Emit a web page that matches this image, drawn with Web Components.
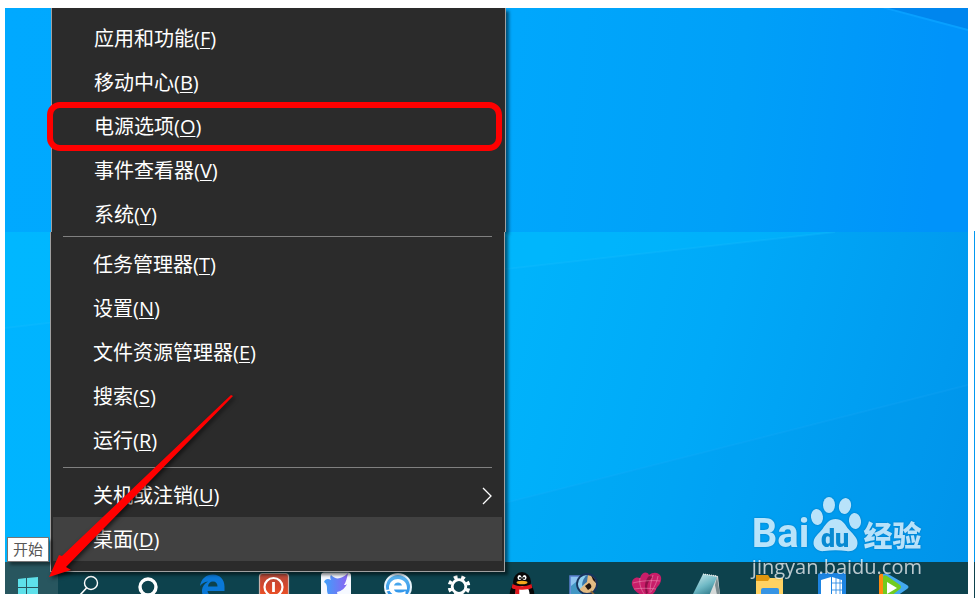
<!DOCTYPE html>
<html lang="zh-CN">
<head>
<meta charset="utf-8">
<title>开始</title>
<style>
  body {
    margin: 0;
    background: #fff;
    font-family: "Open Sans", "Noto Sans CJK SC", sans-serif;
  }
</style>
</head>
<body>
<desktop-screen>
  <wall-paper slot="wallpaper" kind="upper"></wall-paper>
  <wall-paper slot="wallpaper" kind="lower"></wall-paper>

  <task-bar slot="taskbar">
    <task-icon name="start" label="开始" active></task-icon>
    <task-icon name="search" label="搜索"></task-icon>
    <task-icon name="cortana" label="Cortana"></task-icon>
    <task-icon name="edge" label="Edge"></task-icon>
    <task-icon name="power" label="Power"></task-icon>
    <task-icon name="bird" label="Bird"></task-icon>
    <task-icon name="ie" label="Browser"></task-icon>
    <task-icon name="gear" label="设置"></task-icon>
    <task-icon name="penguin" label="QQ"></task-icon>
    <task-icon name="viewer" label="Viewer"></task-icon>
    <task-icon name="heart" label="Heart"></task-icon>
    <task-icon name="notes" label="Notes"></task-icon>
    <task-icon name="folder" label="文件资源管理器"></task-icon>
    <task-icon name="cube" label="Cube"></task-icon>
    <task-icon name="video" label="Video"></task-icon>
  </task-bar>

  <site-mark slot="overlay"></site-mark>

  <power-menu slot="overlay">
    <menu-entry slot="top" key="F">应用和功能</menu-entry>
    <menu-entry slot="top" key="B">移动中心</menu-entry>
    <menu-entry slot="top" key="O" marked>电源选项</menu-entry>
    <menu-entry slot="top" key="V">事件查看器</menu-entry>
    <menu-entry slot="top" key="Y">系统</menu-entry>
    <menu-entry slot="middle" key="T">任务管理器</menu-entry>
    <menu-entry slot="middle" key="N">设置</menu-entry>
    <menu-entry slot="middle" key="E">文件资源管理器</menu-entry>
    <menu-entry slot="middle" key="S">搜索</menu-entry>
    <menu-entry slot="middle" key="R">运行</menu-entry>
    <menu-entry slot="bottom" key="U" submenu>关机或注销</menu-entry>
    <menu-entry slot="bottom" key="D" hovered>桌面</menu-entry>
  </power-menu>

  <hover-tip slot="overlay">开始</hover-tip>
  <red-arrow slot="overlay"></red-arrow>
</desktop-screen>

<script>
const ICONS = {
  start: `
    <path fill="#5ee0ea" d="M13 17l8-1v9h-8zM22 16l11-1v10H22zM13 26h8v9l-8-1zM22 26h11v10l-11-1z"/>`,
  search: `
    <circle cx="33" cy="21" r="6.5" fill="none" stroke="#fff" stroke-width="1.4"/>
    <path d="M28.5 26L22 33" stroke="#fff" stroke-width="1.6"/>`,
  cortana: `<circle cx="28" cy="25" r="8" fill="none" stroke="#fff" stroke-width="3.4"/>`,
  edge: `
    <path fill="#0a78d7" d="M18 24C19 17 24 12.5 31 12.5c7 0 11.5 5 11.5 12V29H25.5c.5 4 4 5 8 5l-3 4c-7 0-11-4-10.5-10 .3-3.500 2.500-6.500 6-8.500-3.500.5-6 2-8 4.500zM26 24.500h9.500c0-3-1.500-5-4.500-5s-4.700 2-5 5z"/>`,
  power: `
    <defs><linearGradient id="g" x2="0" y2="1"><stop offset="0" stop-color="#b04a3c"/><stop offset=".4" stop-color="#d4462c"/><stop offset="1" stop-color="#ff5a20"/></linearGradient></defs>
    <rect x="15.5" y="11.5" width="29" height="30" rx="3" fill="url(#g)" stroke="#c9b3ad" stroke-width="1.2"/>
    <circle cx="29.5" cy="25" r="9" fill="none" stroke="#fff" stroke-width="2.2"/>
    <path d="M29.5 20v10" stroke="#fff" stroke-width="2.8"/>`,
  bird: `
    <defs><linearGradient id="g" x1="0" x2="1"><stop offset="0" stop-color="#3fa0fa"/><stop offset="1" stop-color="#8a63f2"/></linearGradient></defs>
    <rect x="15" y="10.5" width="30" height="32" rx="3" fill="#f6f9ff"/>
    <path fill="url(#g)" d="M18 20c1-3 4-4 7-2-1-2-1-4 0-5 3 3 6 4 9 3 3-1 5-2 8-5-1 5-2 9-4 12 1 0 2 0 3-1-2 4-5 7-10 8l1 5h-8c-3-3-3-6-3-9 0-3-1-5-3-6z"/>`,
  ie: `
    <defs><linearGradient id="g" x2="0" y2="1"><stop offset="0" stop-color="#62b9f0"/><stop offset="1" stop-color="#1e88e8"/></linearGradient></defs>
    <circle cx="30" cy="25" r="13" fill="url(#g)" stroke="#e8f4fb" stroke-width="2"/>
    <path fill="#fff" fill-rule="evenodd" d="M21 25c.5-5 4-8 9-8s9 3.500 9 9v1.500H26c.5 2 2 3 4.500 3 3 0 5-.5 7-1.500V33c-9 3-17-1-16.500-8zm5-1.500h8c-.5-2-2-3-4-3s-3.500 1-4 3z"/>
    <path fill="none" stroke="#fff" stroke-width="1.3" d="M17 29l5-1"/>`,
  gear: `
    <circle cx="29" cy="24.5" r="6.8" fill="none" stroke="#fff" stroke-width="2.8"/>
    <circle cx="29" cy="24.5" r="9.5" fill="none" stroke="#fff" stroke-width="3.6" stroke-dasharray="3.700 3.761" stroke-dashoffset="-2"/>`,
  penguin: `
    <ellipse cx="30" cy="20" rx="9" ry="10" fill="#080808"/>
    <path fill="#080808" d="M21 22c-2 4-4 8-3 12h24c1-4-1-8-3-12z"/>
    <ellipse cx="30.5" cy="31" rx="7" ry="7" fill="#fff"/>
    <ellipse cx="27.5" cy="15.5" rx="2" ry="2.6" fill="#fff"/><ellipse cx="32.5" cy="15.5" rx="2" ry="2.6" fill="#fff"/>
    <circle cx="28" cy="16" r="1" fill="#000"/><circle cx="32" cy="16" r="1" fill="#000"/>
    <ellipse cx="30" cy="20.5" rx="5.5" ry="1.8" fill="#f5a81c"/>
    <path fill="#e3171d" d="M20.5 22c6 3 13 3 19 0l.8 4c-4 1.500-9 2-13 1.500V32h-4v-5c-2 0-3-.5-3.600-1z"/>`,
  viewer: `
    <path fill="#8cc3ef" stroke="#5a7fd0" stroke-width="1.5" d="M16 14h14v20H16z"/>
    <path fill="#4297c4" d="M17 24l5-4 7 4v9H17z"/>
    <circle cx="33" cy="22" r="10" fill="#e3bb83"/>
    <path fill="#8fd0ef" d="M33 12a10 10 0 0 0-8 16l5-5 4-10z"/>
    <path fill="#3a76a8" d="M34 12c-4 3-6 7-6 12l5-4z"/>
    <path fill="#20150f" d="M31 24l4-3c2 1 3 3 2 5l-3 2zM37 13c3 2 5 5 5 8l-3-3z"/>
    <circle cx="33" cy="22" r="10" fill="none" stroke="#17335d" stroke-width="1.8"/>
    <path d="M37 29l4 5" stroke="#8a6438" stroke-width="2"/>`,
  heart: `
    <path fill="#c81e69" d="M30 34c-6-1-12-4-14-11-1-5 3-9 8-7 2-6 7-7 9-3 5-4 11-2 12 2 1 6-3 9-5 12-1 4-4 7-10 7z"/>
    <path fill="#8d0f47" d="M33 14c-4 4-5 10-3 18l2-1c-2-8 0-12 5-16z"/>
    <path fill="none" stroke="#ef9dbd" stroke-width=".5" d="M17 21c7-2 18-3 27-2M18 27c7-1 15-1 22 0M24 16c-1 6 1 12 5 17M37 13c-2 6-3 12-3 18M42 14c-1 6-3 10-7 16"/>`,
  notes: `
    <defs><linearGradient id="g" x1="0" y1="0" x2=".6" y2="1"><stop offset="0" stop-color="#d6edef"/><stop offset=".6" stop-color="#6fb9c5"/><stop offset="1" stop-color="#347f8f"/></linearGradient></defs>
    <path fill="#d5d9d8" d="M25 12l15 2 2 19H30z"/>
    <path fill="url(#g)" d="M25 12l14 3-8 19H14z"/>
    <path fill="#7b8c90" d="M39 15l3 18h-3l-2-10z"/>
    <path stroke="#e8f2f3" stroke-width="1.2" stroke-dasharray="1 1" d="M25 12l14 2"/>`,
  folder: `
    <path fill="#e0960e" d="M16 13h12l2 3v3H16z"/>
    <path fill="#ffd262" d="M16 19h12l2-3h13v20H16z"/>
    <path fill="#3694e4" d="M21 28q0-2 2-2h14q2 0 2 2v8h-4v-4H25v4h-4z"/>`,
  cube: `
    <rect x="16" y="11" width="28" height="30" rx="2" fill="#1d84e2"/>
    <path fill="#fff" d="M19 18l10-3v20l-10-3zM30 15l10 3v14l-10 3z"/>
    <path fill="none" stroke="#1d84e2" stroke-width=".8" d="M30 21h11M30 28h11M34 15v19M38 16v18"/>`,
  video: `
    <path fill="#ff8b0f" d="M15 14q0-3 4-2l8 4v18H15z"/>
    <path fill="#43a9f1" d="M19 12q2-1 5 0l19 11q3 2 0 4l-10 7H21z"/>
    <path fill="#72cb20" d="M19 15q1-3 4-1l13 9q2 2 0 4l-9 7h-8z"/>
    <path fill="#fff" d="M23 20l10 6-10 6z"/>`
};

class DesktopScreen extends HTMLElement {
  constructor() {
    super();
    this.attachShadow({ mode: "open" });
  }

  connectedCallback() {
    this.shadowRoot.innerHTML = `
      <style>
        :host {
          display: grid;
          grid-template-columns: 1fr 1px;
          column-gap: 6px;
          padding: 8px 2px 2px 5px;
        }
        .screen {
          position: relative;
          display: flex;
          flex-direction: column;
          margin-bottom: 4px;
        }
        .edge {
          margin-top: 223px;
          background: linear-gradient(#0398f0 331px, #0d424d 331px);
        }
      </style>
      <main class="screen">
        <slot name="wallpaper"></slot>
        <slot name="taskbar"></slot>
        <slot name="overlay"></slot>
      </main>
      <div class="edge"></div>
    `;
  }
}

class WallPaper extends HTMLElement {
  constructor() {
    super();
    this.attachShadow({ mode: "open" });
  }

  connectedCallback() {
    const upper = this.getAttribute("kind") === "upper";
    const rays = upper
      ? `<path fill="#0086ee" d="M876 0H963V22z"/>
         <path stroke="#08a0ff" stroke-width="2" d="M876 -1L963 22"/>`
      : `<path fill="#00bcff" opacity=".4" d="M0 0H830L500 37L0 96z"/>
         <path stroke="#1cc0ff" stroke-width="2" opacity=".25" d="M0 96L500 37L830 0"/>
         <path fill="#008be0" opacity=".12" d="M963 153L500 271V330H963z"/>
         <path stroke="#30b4ff" stroke-width="2" opacity=".12" d="M963 153L500 271"/>`;
    this.shadowRoot.innerHTML = `
      <style>
        :host {
          display: block;
          height: ${upper ? 224 : 330}px;
          background: ${upper
            ? "linear-gradient(97deg, #00a9ff 0%, #00a7fc 52%, #00a0f8 75%, #0093fa 96%)"
            : "linear-gradient(106deg, #00b4ff 0%, #00b3fb 50%, #00a9f8 70%, #0095ec 100%)"};
        }
        svg {
          display: block;
          width: 100%;
          height: 100%;
        }
      </style>
      <svg viewBox="0 0 963 ${upper ? 224 : 330}" preserveAspectRatio="none" fill="none" aria-hidden="true">${rays}</svg>
    `;
  }
}

class TaskBar extends HTMLElement {
  constructor() {
    super();
    this.attachShadow({ mode: "open" });
  }

  connectedCallback() {
    this.shadowRoot.innerHTML = `
      <style>
        :host {
          display: flex;
          height: 32px;
          overflow: hidden;
          background: #0d424d;
        }
      </style>
      <slot></slot>
    `;
  }
}

class TaskIcon extends HTMLElement {
  constructor() {
    super();
    this.attachShadow({ mode: "open" });
  }

  connectedCallback() {
    const width = this.hasAttribute("active") ? 53 : 62;
    this.shadowRoot.innerHTML = `
      <style>
        :host {
          display: block;
          flex: none;
        }
        :host([active]) {
          background: #28565f;
        }
        button {
          display: block;
          padding: 0;
          border: 0;
          background: none;
        }
        svg {
          display: block;
        }
      </style>
      <button aria-label="${this.getAttribute("label")}">
        <svg width="${width}" height="32" viewBox="0 0 ${width} 32">${ICONS[this.getAttribute("name")]}</svg>
      </button>
    `;
  }
}

class PowerMenu extends HTMLElement {
  constructor() {
    super();
    this.attachShadow({ mode: "open" });
  }

  connectedCallback() {
    this.shadowRoot.innerHTML = `
      <style>
        :host {
          position: absolute;
          top: 0;
          left: 45px;
          width: 455px;
          color: #fff;
        }
        .part {
          box-sizing: border-box;
          border: solid #a0a0a0;
          border-width: 0 1px;
          background: #2b2b2b;
          box-shadow: 3px 3px 3px rgba(0, 0, 0, .5);
        }
        .upper {
          height: 224px;
          margin: 0 -1px 0 1px;
          padding-top: 8px;
        }
        .lower {
          position: relative;
          padding: 4px 0 10px;
          border-bottom-width: 1px;
        }
        /* the last row of the upper part reaches over the lower one */
        .rows {
          position: relative;
          z-index: 1;
        }
        hr {
          height: 1px;
          margin: 5px 12px;
          border: 0;
          background: #808080;
        }
        hr:first-child {
          margin-top: 0;
        }
      </style>
      <div class="part upper">
        <div class="rows"><slot name="top"></slot></div>
      </div>
      <div class="part lower">
        <hr>
        <slot name="middle"></slot>
        <hr>
        <slot name="bottom"></slot>
      </div>
    `;
  }
}

class MenuEntry extends HTMLElement {
  constructor() {
    super();
    this.attachShadow({ mode: "open" });
  }

  connectedCallback() {
    const arrow = this.hasAttribute("submenu")
      ? `<svg width="12" height="18" viewBox="0 0 12 18" aria-hidden="true">
           <path d="M2 1l8 8-8 8" fill="none" stroke="#fff" stroke-width="1.3"/>
         </svg>`
      : "";
    this.shadowRoot.innerHTML = `
      <style>
        :host {
          display: block;
          position: relative;
          height: 44px;
          margin: 0 2px;
        }
        :host([hovered]) {
          background: #414141;
        }
        /* red frame drawn round the wanted row */
        :host([marked])::after {
          content: "";
          position: absolute;
          inset: -2px 1px -3px -7px;
          border: 6px solid #f00;
          border-radius: 13px;
        }
        button {
          display: flex;
          align-items: center;
          justify-content: space-between;
          width: 100%;
          height: 100%;
          padding: 1px 9px 0 40px;
          border: 0;
          background: none;
          color: inherit;
          font: inherit;
          font-size: 20px;
          line-height: 28px;
          text-align: left;
        }
        u {
          text-decoration-thickness: 1px;
          text-underline-offset: 2px;
        }
      </style>
      <button role="menuitem">
        <span><slot></slot>(<u>${this.getAttribute("key")}</u>)</span>
        ${arrow}
      </button>
    `;
  }
}

class HoverTip extends HTMLElement {
  constructor() {
    super();
    this.attachShadow({ mode: "open" });
  }

  connectedCallback() {
    this.shadowRoot.innerHTML = `
      <style>
        :host {
          position: absolute;
          left: 2px;
          bottom: 32px;
          box-sizing: border-box;
          height: 25px;
          padding: 0 5px;
          border: 1px solid #767676;
          background: #fff;
          box-shadow: 3px 3px 3px rgba(0, 0, 0, .4);
          color: #575757;
          font-size: 15px;
          line-height: 23px;
        }
      </style>
      <slot></slot>
    `;
  }
}

class RedArrow extends HTMLElement {
  constructor() {
    super();
    this.attachShadow({ mode: "open" });
  }

  connectedCallback() {
    this.shadowRoot.innerHTML = `
      <style>
        :host {
          position: absolute;
          left: 43px;
          bottom: 14px;
          pointer-events: none;
        }
        svg {
          display: block;
          overflow: visible;
          filter: drop-shadow(2px 2px 2px rgba(0, 0, 0, .6));
        }
      </style>
      <svg width="188" height="188" viewBox="0 0 188 188" aria-hidden="true">
        <path fill="#f00" d="M1 185L11 163L14 164L183 3L185 4L18 175L23 178z"/>
      </svg>
    `;
  }
}

class SiteMark extends HTMLElement {
  constructor() {
    super();
    this.attachShadow({ mode: "open" });
  }

  connectedCallback() {
    this.shadowRoot.innerHTML = `
      <style>
        :host {
          position: absolute;
          right: 46px;
          bottom: 13px;
          color: #fff;
          opacity: .72;
          text-shadow: 0 0 2px rgba(0, 60, 110, .6);
        }
        .logo {
          display: flex;
          align-items: flex-end;
        }
        .latin {
          font: 700 40px/38px Roboto, sans-serif;
        }
        .han {
          font: 900 29px/38px "Noto Sans CJK SC", sans-serif;
          margin-left: 2px;
        }
        svg {
          display: block;
          filter: drop-shadow(0 0 1px rgba(0, 60, 110, .5));
        }
        .du {
          fill: #0a84c8;
          font: 900 25px Roboto, sans-serif;
          text-shadow: none;
        }
        .url {
          font-size: 20px;
          font-weight: 500;
          line-height: 28px;
        }
      </style>
      <div class="logo">
        <span class="latin">Bai</span>
        <svg width="52" height="57" viewBox="0 0 52 57">
          <g fill="#fff">
            <ellipse cx="8" cy="21" rx="6" ry="8" transform="rotate(-8 8 21)"/>
            <ellipse cx="20" cy="9" rx="6" ry="8"/>
            <ellipse cx="36" cy="10" rx="6" ry="8" transform="rotate(12 36 10)"/>
            <ellipse cx="46" cy="25" rx="6" ry="8" transform="rotate(-8 46 25)"/>
            <path d="M26.5 23c6 0 9 4 12 9 4 5 10 9 10 15s-5 9-11 8c-7-1-15-1-22 0-6 1-11-3-11-8 0-6 5-9 9-14 4-6 7-10 13-10z"/>
          </g>
          <text class="du" x="12" y="51">du</text>
        </svg>
        <span class="han">经验</span>
      </div>
      <div class="url">jingyan.baidu.com</div>
    `;
  }
}

customElements.define("desktop-screen", DesktopScreen);
customElements.define("wall-paper", WallPaper);
customElements.define("task-bar", TaskBar);
customElements.define("task-icon", TaskIcon);
customElements.define("power-menu", PowerMenu);
customElements.define("menu-entry", MenuEntry);
customElements.define("hover-tip", HoverTip);
customElements.define("red-arrow", RedArrow);
customElements.define("site-mark", SiteMark);
</script>
</body>
</html>
